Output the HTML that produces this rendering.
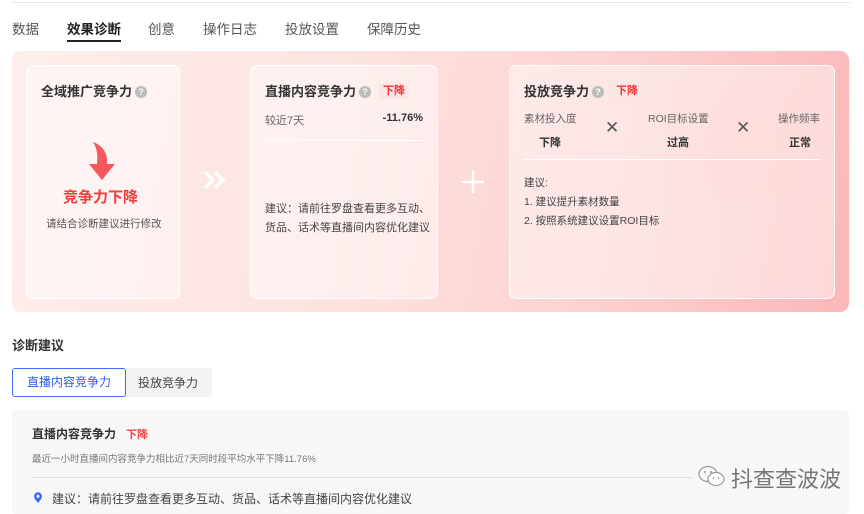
<!DOCTYPE html>
<html><head><meta charset="utf-8"><style>
*{margin:0;padding:0;box-sizing:border-box}
body{width:864px;height:514px;overflow:hidden;background:#fff;font-family:"Liberation Sans","Noto Sans CJK SC",sans-serif;color:#333;position:relative}
.a{position:absolute;white-space:nowrap}
.card{position:absolute;border:1.5px solid rgba(255,255,255,.9);border-radius:7px;background:rgba(255,255,255,.45)}
.q{display:inline-block;width:12px;height:12px;border-radius:50%;background:#bbb;color:#fff;font-size:9px;text-align:center;line-height:12px;vertical-align:1px;margin-left:3px}
.tag{display:inline-block;background:#fbe6e6;color:#e33;font-size:11px;font-weight:bold;padding:0 4px;line-height:16px;margin-left:8px;vertical-align:2px}
</style></head><body>
<div class="a" style="left:12px;top:2px;width:838px;height:1px;background:#e8e8e8"></div>
<div class="a" style="left:12px;top:18px;font-size:13.5px;color:#555">数据</div>
<div class="a" style="left:67px;top:18px;font-size:13.5px;color:#222;font-weight:bold">效果诊断</div>
<div class="a" style="left:67px;top:40px;width:54px;height:2px;background:#222"></div>
<div class="a" style="left:148px;top:18px;font-size:13.5px;color:#555">创意</div>
<div class="a" style="left:203px;top:18px;font-size:13.5px;color:#555">操作日志</div>
<div class="a" style="left:285px;top:18px;font-size:13.5px;color:#555">投放设置</div>
<div class="a" style="left:367px;top:18px;font-size:13.5px;color:#555">保障历史</div>

<div class="a" style="left:12px;top:51px;width:837px;height:261px;border-radius:9px;background:linear-gradient(100deg,#fdeeec 0%,#fde3e0 40%,#fcd2d0 70%,#fbb7b8 100%)"></div>
<div class="a" style="left:640px;top:60px;width:200px;height:160px;border-radius:50%;background:radial-gradient(circle,rgba(255,190,190,.5),rgba(255,190,190,0) 70%)"></div>

<div class="card" style="left:26px;top:65px;width:154px;height:234px">
 <div class="a" style="left:14px;top:15px;font-size:13px;font-weight:bold;color:#333">全域推广竞争力<span class="q">?</span></div>
 <svg class="a" style="left:60px;top:74px" width="30" height="42" viewBox="0 0 30 42"><path d="M6 2 C17 6 21 15 20 24 L28 24 L15 40 L2 24 L10 24 C11 15 10 8 6 2Z" fill="#f5585a"/></svg>
 <div class="a" style="left:36px;top:120px;font-size:15px;font-weight:bold;color:#f03e3e">竞争力下降</div>
 <div class="a" style="left:19px;top:150px;font-size:10.5px;color:#555">请结合诊断建议进行修改</div>
</div>
<svg class="a" style="left:203px;top:170px" width="24" height="20" viewBox="0 0 24 20"><path d="M2 2 L10 10 L2 18 M12 2 L20 10 L12 18" fill="none" stroke="#fff" stroke-width="3.5"/></svg>

<div class="card" style="left:250px;top:65px;width:188px;height:234px">
 <div class="a" style="left:14px;top:15px;font-size:13px;font-weight:bold;color:#333">直播内容竞争力<span class="q">?</span><span class="tag">下降</span></div>
 <div class="a" style="left:14px;top:46px;font-size:11px;color:#666">较近7天</div>
 <div class="a" style="right:14px;top:46px;font-size:11px;font-weight:bold;color:#333">-11.76%</div>
 <div class="a" style="left:14px;top:74px;width:159px;height:1px;background:rgba(255,255,255,.9)"></div>
 <div class="a" style="left:14px;top:134px;font-size:11px;color:#444;line-height:19px;white-space:normal;width:165px">建议：请前往罗盘查看更多互动、货品、话术等直播间内容优化建议</div>
</div>
<svg class="a" style="left:462px;top:171px" width="22" height="22" viewBox="0 0 22 22"><path d="M11 0V22M0 11H22" stroke="#fff" stroke-width="2.5"/></svg>

<div class="card" style="left:509px;top:65px;width:326px;height:234px">
 <div class="a" style="left:14px;top:15px;font-size:13px;font-weight:bold;color:#333">投放竞争力<span class="q">?</span><span class="tag">下降</span></div>
 <div class="a" style="left:14px;top:45px;font-size:10.5px;color:#666">素材投入度</div>
 <div class="a" style="left:29px;top:68px;font-size:11px;font-weight:bold;color:#333">下降</div>
 <div class="a" style="left:95px;top:52px;font-size:17px;color:#555">✕</div>
 <div class="a" style="left:138px;top:45px;font-size:10.5px;color:#666">ROI目标设置</div>
 <div class="a" style="left:157px;top:68px;font-size:11px;font-weight:bold;color:#333">过高</div>
 <div class="a" style="left:226px;top:52px;font-size:17px;color:#555">✕</div>
 <div class="a" style="left:268px;top:45px;font-size:10.5px;color:#666">操作频率</div>
 <div class="a" style="left:279px;top:68px;font-size:11px;font-weight:bold;color:#333">正常</div>
 <div class="a" style="left:14px;top:93px;width:297px;height:1px;background:rgba(255,255,255,.9)"></div>
 <div class="a" style="left:14px;top:108px;font-size:10.5px;color:#444;line-height:19px">建议:<br>1. 建议提升素材数量<br>2. 按照系统建议设置ROI目标</div>
</div>

<div class="a" style="left:12px;top:335px;font-size:13px;font-weight:bold;color:#333">诊断建议</div>
<div class="a" style="left:12px;top:368px;width:200px;height:29px;background:#f3f3f3;border-radius:3px"></div>
<div class="a" style="left:12px;top:368px;width:114px;height:29px;border:1.5px solid #3d6ef5;border-radius:3px;background:#fff;font-size:12px;color:#2f5fe8;text-align:center;line-height:26px">直播内容竞争力</div>
<div class="a" style="left:138px;top:374px;font-size:12px;color:#444">投放竞争力</div>

<div class="a" style="left:12px;top:410px;width:837px;height:104px;background:#f7f7f7;border-radius:4px"></div>
<div class="a" style="left:32px;top:425px;font-size:12px;font-weight:bold;color:#333">直播内容竞争力</div>
<div class="a" style="left:126px;top:426px;font-size:11px;font-weight:bold;color:#f04545">下降</div>
<div class="a" style="left:32px;top:451px;font-size:9.5px;color:#777">最近一小时直播间内容竞争力相比近7天同时段平均水平下降11.76%</div>
<div class="a" style="left:32px;top:477px;width:660px;height:1px;background:#ddd"></div>
<svg class="a" style="left:33px;top:492px" width="10" height="12" viewBox="0 0 10 12"><path d="M5 11C2 7.5 1 6 1 4.3A4 4 0 0 1 9 4.3C9 6 8 7.5 5 11Z" fill="#3d6ef5"/><circle cx="5" cy="4.3" r="1.5" fill="#fff"/></svg>
<div class="a" style="left:52px;top:490px;font-size:12px;color:#444">建议：请前往罗盘查看更多互动、货品、话术等直播间内容优化建议</div>

<svg class="a" style="left:697px;top:464px" width="30" height="26" viewBox="0 0 30 26"><ellipse cx="11" cy="10" rx="9" ry="7.5" fill="none" stroke="#999" stroke-width="1.2"/><ellipse cx="19" cy="15" rx="8" ry="6.5" fill="#fff" stroke="#999" stroke-width="1.2"/><circle cx="8" cy="8" r="1" fill="#999"/><circle cx="14" cy="8" r="1" fill="#999"/><circle cx="16.5" cy="14" r=".9" fill="#999"/><circle cx="21.5" cy="14" r=".9" fill="#999"/></svg>
<div class="a" style="left:731px;top:462px;font-size:22px;color:#777">抖查查波波</div>
</body></html>
